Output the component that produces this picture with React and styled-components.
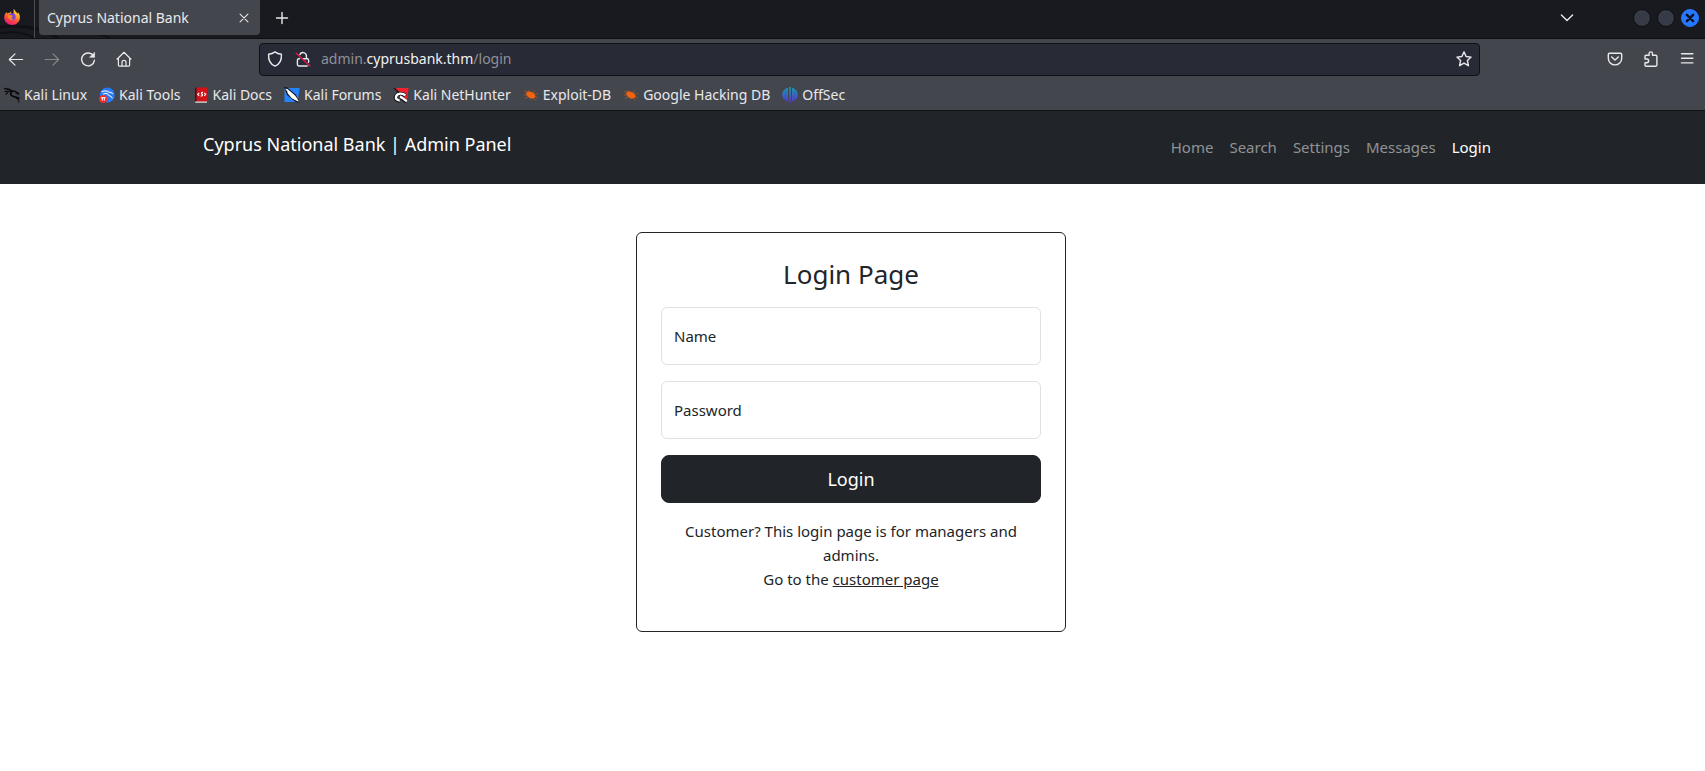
import React from 'react';
import styled, { createGlobalStyle } from 'styled-components';

const GlobalStyle = createGlobalStyle`
  *, *::before, *::after { box-sizing: border-box; }
  body {
    margin: 0;
    background: #fff;
    color: #212529;
    font-family: "Noto Sans", sans-serif;
    font-size: 15px;
    line-height: 24px;
  }
  button, input { font: inherit; }
  svg { display: block; flex: none; }
`;

/* ---------- browser chrome ---------- */

const Chrome = styled.div`
  color: #e9e9ea;
  font-size: 14px;
  line-height: 20px;
`;

const TabStrip = styled.div`
  position: relative;
  display: flex;
  align-items: flex-start;
  height: 39px;
  background: #191a20;
  border-bottom: 1px solid #0f1014;
`;

const StripArt = styled.svg`
  position: absolute;
  left: 0;
  bottom: 0;
`;

const PinnedTab = styled.button`
  position: relative;
  width: 35px;
  height: 38px;
  padding: 0 0 4px 4px;
  border: 0;
  border-right: 1px solid #4b4c52;
  background: none;
`;

const Tab = styled.div`
  position: relative;
  display: flex;
  align-items: center;
  justify-content: space-between;
  width: 221px;
  height: 35px;
  margin-left: 4px;
  padding: 0 8px;
  border-radius: 0 0 4px 4px;
  background: #44464e;
`;

const IconButton = styled.button`
  display: flex;
  align-items: center;
  justify-content: center;
  width: ${(p) => p.$width || 36}px;
  height: ${(p) => p.$height || 32}px;
  padding: 0;
  border: 0;
  background: none;
  color: inherit;
  opacity: ${(p) => (p.disabled ? 0.4 : 1)};
`;

const WindowControls = styled.div`
  display: flex;
  align-items: center;
  gap: 6px;
  height: 35px;
  margin-left: auto;
  padding-right: 6px;
`;

const TabListButton = styled(IconButton)`
  margin-right: 42px;
`;

const WindowButton = styled.button`
  display: flex;
  align-items: center;
  justify-content: center;
  width: 18px;
  height: 18px;
  padding: 0;
  border: 1px solid ${(p) => (p.$close ? '#2777ff' : '#0b0c0f')};
  border-radius: 50%;
  background: ${(p) => (p.$close ? '#2777ff' : '#363b47')};
  color: #0d1322;
`;

const Toolbar = styled.div`
  display: flex;
  align-items: center;
  height: 40px;
  background: #44464e;
`;

const ButtonGroup = styled.div`
  display: flex;

  &:first-child { margin-left: -2px; }
`;

const Spring = styled.div`
  flex: 1 1 0;
  max-width: 117px;
`;

const AddressBar = styled.div`
  display: flex;
  align-items: center;
  flex: 1 1 auto;
  height: 33px;
  padding: 0 7px;
  border: 1px solid #101116;
  border-radius: 4px;
  background: #282a36;
`;

const SiteIcons = styled.div`
  display: flex;
  gap: 12px;
  margin-right: 10px;
`;

const AddressField = styled.div`
  display: grid;
  flex: 1;
  min-width: 0;
`;

const AddressText = styled.label`
  grid-area: 1 / 1;
  align-self: center;
  color: #8f9098;
  white-space: nowrap;

  strong {
    color: #f1f1f2;
    font-weight: 400;
  }
`;

const AddressInput = styled.input`
  grid-area: 1 / 1;
  width: 100%;
  height: 28px;
  padding: 0;
  border: 0;
  outline: 0;
  background: none;
  color: inherit;
`;

const BookmarkBar = styled.nav`
  display: flex;
  align-items: center;
  gap: 12px;
  height: 32px;
  padding: 0 4px;
  border-bottom: 1px solid #0f1113;
  background: #44464e;
`;

const Bookmark = styled.a`
  display: flex;
  align-items: center;
  gap: 4px;
  color: inherit;
  text-decoration: none;
  white-space: nowrap;
`;

/* ---------- page ---------- */

const SiteHeader = styled.header`
  padding: 16px 3px 17px 0;
  background: #212529;
`;

const Container = styled.div`
  display: flex;
  justify-content: space-between;
  align-items: center;
  max-width: 1320px;
  margin: 0 auto;
  padding: 0 12px;
`;

const Brand = styled.a`
  padding-bottom: 6px;
  color: #fff;
  font-size: 18px;
  line-height: 32px;
  text-decoration: none;
`;

const SiteNav = styled.nav`
  display: flex;
`;

const NavLink = styled.a`
  padding: 8px;
  color: ${(p) => (p['aria-current'] ? '#fff' : '#909294')};
  text-decoration: none;
`;

const Main = styled.main`
  padding: 48px 3px 48px 0;
`;

const LoginCard = styled.form`
  max-width: 430px;
  margin: 0 auto;
  padding: 24px 24px 40px;
  border: 1px solid #212529;
  border-radius: 6px;
  text-align: center;
`;

const Title = styled.h1`
  margin: 0 0 16px;
  font-size: 26px;
  font-weight: 400;
  line-height: 34px;
`;

const Field = styled.div`
  display: grid;
  margin-bottom: 16px;
`;

const FieldLabel = styled.label`
  grid-area: 1 / 1;
  place-self: center start;
  padding-left: 13px;
`;

const FieldInput = styled.input`
  grid-area: 1 / 1;
  width: 100%;
  height: 58px;
  padding: 16px 12px;
  border: 1px solid #dee2e6;
  border-radius: 6px;
  background: transparent;
  color: inherit;
`;

const SubmitButton = styled.button`
  width: 100%;
  height: 48px;
  margin-bottom: 16px;
  border: 1px solid #212529;
  border-radius: 8px;
  background: #212529;
  color: #fff;
  font-size: 18px;
`;

const Hint = styled.p`
  margin: 0;

  a { color: inherit; }
`;

/* ---------- icons ---------- */

const Line = ({ children, size = 16, width = 1.2 }) => (
  <svg width={size} height={size} viewBox="0 0 16 16" fill="none" stroke="currentColor"
    strokeWidth={width} strokeLinecap="round" strokeLinejoin="round" aria-hidden="true">
    {children}
  </svg>
);

const BackIcon = () => <Line><path d="M1.3 8.5H14.7M7 2.8L1.3 8.5 7 14.2" /></Line>;
const ForwardIcon = () => <Line><path d="M1.3 8.5H14.7M9 2.8l5.7 5.7L9 14.2" /></Line>;
const ReloadIcon = () => (
  <Line width={1.4}>
    <path d="M13.6 5.2A6.4 6.4 0 1 0 14.4 9.3" />
    <path d="M14.6 1.6v4.7H9.9z" fill="currentColor" strokeWidth="0.6" />
  </Line>
);
const HomeIcon = () => (
  <Line>
    <path d="M1 8.2L8 1.3l7 6.9M2.4 7v7.3c0 .5.3.8.8.8h9.6c.5 0 .8-.3.8-.8V7" />
    <path d="M6 15v-3.6a2 2 0 0 1 4 0V15" />
  </Line>
);
const ShieldIcon = () => (
  <Line width={1.4}><path d="M8 .9C6 2.4 4 3 1.6 3.3c-.4 5.4 1.4 9.8 6.4 11.9 5-2.1 6.8-6.5 6.4-11.9C12 3 10 2.4 8 .9z" /></Line>
);
const InsecureIcon = () => (
  <Line width={1.4}>
    <path d="M4.9 3.600a3.400 3.400 0 0 1 6.500 1v3M7.500 7.800h4.700c.9 0 1.400.5 1.400 1.400v2M12.200 15H3.800c-.9 0-1.400-.5-1.400-1.400V9.200c0-.9.5-1.400 1.400-1.400h.7" />
    <path d="M1.200 2.200l13.500 12.600" stroke="#e2174c" strokeWidth="1.500" />
  </Line>
);
const StarIcon = () => (
  <Line width={1.4}><path d="M8 .9l2.1 4.6 5 .6-3.7 3.4 1 5.2L8 12.1l-4.4 2.6 1-5.2L.9 6.1l5-.6z" /></Line>
);
const PocketIcon = () => (
  <Line width={1.4}>
    <path d="M2.5 2.2h11c.7 0 1.2.5 1.2 1.2v3.8a6.7 6.7 0 0 1-13.4 0V3.4c0-.7.5-1.2 1.2-1.2z" />
    <path d="M4.7 6L8 9l3.300-3" />
  </Line>
);
const PuzzleIcon = () => (
  <Line width={1.4}>
    <path d="M2 8V5.3c0-.7.4-1.1 1.1-1.1h3V2.6a1.7 1.7 0 0 1 3.4 0v1.6h3.3c.7 0 1.1.4 1.1 1.1v8.8c0 .7-.4 1.1-1.1 1.1H3.1c-.7 0-1.1-.4-1.1-1.1v-2.4h1.8a1.85 1.85 0 0 0 0-3.7z" />
  </Line>
);
const MenuIcon = () => <Line width={1.4}><path d="M2.500 2.700h11.400M2.500 7.300h11.400M2.500 11.900h11.400" /></Line>;
const CloseIcon = () => <Line size={14}><path d="M3.5 3.5l9 9m0-9l-9 9" /></Line>;
const PlusIcon = () => <Line width={1.4}><path d="M2.5 8h11M8 2.5v11" /></Line>;
const ChevronIcon = () => <Line width={1.4}><path d="M2.4 5L8 10.5 13.6 5" /></Line>;

const FirefoxIcon = () => (
  <svg width="16" height="16" viewBox="0 0 16 16" aria-hidden="true">
    <defs>
      <linearGradient id="fox" x1="0.8" y1="0" x2="0.3" y2="1">
        <stop offset="0" stopColor="#fff04a" />
        <stop offset="0.35" stopColor="#ffa029" />
        <stop offset="0.65" stopColor="#ff4a3d" />
        <stop offset="1" stopColor="#e8177c" />
      </linearGradient>
    </defs>
    <path fill="url(#fox)" d="M9.7 0c1 .9 1.8 2 2.2 3.1.6.2 1.5 1.1 1.7 1.5.3-.1.5-.8.4-1.3 1.3 1.4 1.9 3.4 1.9 5.1 0 4.2-3.5 7.5-7.8 7.5S.2 12.600 .2 8.400C.2 6 1.400 4.100 2.600 2.900c0 .6.2 1.100.5 1.500C4 3.700 5 3.500 5.800 3.700c.5-.6 1.200-1 1.900-1.100-.6.6-1 1.200-.9 1.800 1 .1 1.700.4 2.400 1C9.900 3.500 9.500 1.400 9.700 0z" />
    <circle cx="8.100" cy="7.800" r="3.500" fill="#7542e5" />
    <path fill="#ff8a1e" d="M3.600 6.200c1.300-.8 2.700-.7 3.900.1.700.5 1.700.3 1.700.8-.2.700-1.700.8-1.800 1.300.1 1 1.200 1.600 2.700 1.100-1 1.700-4.200 1.900-5.600-.2-.6-.9-.9-2-.9-3.100z" />
  </svg>
);

const KaliIcon = () => (
  <svg width="16" height="16" viewBox="0 0 16 16" fill="none" stroke="#0b0b0d"
    strokeLinecap="round" strokeLinejoin="round" aria-hidden="true">
    <path strokeWidth="1.500" d="M.6 1.500c3 .1 5.600.8 7.700 2.600 1.700-.3 3.200.1 4.200 1.200l2 1.200" />
    <path strokeWidth="1.200" d="M.9 4.600c2.500-.8 4.900-.7 6.500.4M3.800 5.400C2.900 6 2.300 6.700 2 7.500" />
    <path strokeWidth="1.900" d="M8.300 4.500C6 5.800 6.200 8.300 8.500 9.100c2.500.7 4.600 1.100 5.600 2.800" />
    <path strokeWidth="1" d="M14.100 11.500c.6 1.300.8 2.500.6 3.600M11.500 9.900l3.900.9M11.500 5.600l2.800 2" />
  </svg>
);
const ToolsIcon = () => (
  <svg width="16" height="16" viewBox="0 0 16 16" aria-hidden="true">
    <circle cx="8.300" cy="8" r="7.500" fill="#2779f5" />
    <path d="M2.500 5c3-1.700 5.500-1.200 7.300.1 2 .2 3.600 1 4.100 2M4 7.200c2-1 4-.8 4.800 0 .5 1.600 3 1.500 4.700 4" stroke="#d9e9ff" strokeWidth="1.100" fill="none" />
    <circle cx="4.200" cy="12" r="4" fill="#ee2c2c" />
    <path d="M1.900 10.700h4.700M3.300 10.700v3M5.300 10.700v3" stroke="#fff" strokeWidth="1" />
  </svg>
);
const DocsIcon = () => (
  <svg width="16" height="16" viewBox="0 0 16 16" aria-hidden="true">
    <path fill="#b9b9bb" d="M2 14h12v2H3a1 1 0 0 1-1-1z" />
    <path fill="#d31217" d="M2 .5h12v13.800H2z" />
    <path fill="#3a1220" d="M2 .5h1.500v13.800H2z" />
    <path d="M6.200 5.800L4.700 7.300l1.500 1.500M11.300 5.800l1.500 1.500-1.500 1.500M10 5.400c-2.300 0-1.600 1.500-.9 1.900.9.500.4 2-1.500 1.700" stroke="#fff" strokeWidth="1.100" fill="none" />
  </svg>
);
const ForumsIcon = () => (
  <svg width="16" height="16" viewBox="0 0 16 16" aria-hidden="true">
    <path fill="#2584fb" d="M.5 1h15.200l-2.200 14H.5z" />
    <path fill="#15171d" d="M0 0l3 .2 9 7.500 3.500 8-4-.6L3 8z" />
    <path fill="#fff" d="M1 1.700l2.400.2 2.700 2.300 4.700 4 2.200 3 1.800 3.600-3.300-1.600-3.700-1.900-4-4.900-.7-2.400z" />
  </svg>
);
const NetHunterIcon = () => (
  <svg width="16" height="16" viewBox="0 0 16 16" aria-hidden="true">
    <path fill="#f5222d" d="M2 1h13.500L14.300 12 9 14z" />
    <path fill="none" stroke="#17171b" strokeWidth="4" d="M12.300 9C10 5.500 3.500 6 2.700 10c-.3 2 1.300 3.800 4 3.800M7 10.500c2 .1 3.500 2 7 4" />
    <path fill="none" stroke="#fff" strokeWidth="2.400" d="M12.400 8.500C10 5.800 4 5.800 3 9.700c-.5 2.200 1.600 3.800 3.700 3.500M7 9.700c2 .1 3.500 2.800 7 4.400" />
    <path stroke="#17171b" strokeWidth="1.600" d="M1 1l5 4.500" />
  </svg>
);
const BugIcon = () => (
  <svg width="16" height="16" viewBox="0 0 16 16" aria-hidden="true">
    <ellipse cx="7.800" cy="8" rx="5" ry="3.100" transform="rotate(28 7.800 8)" fill="#f2630f" />
    <path fill="none" stroke="#e8600f" strokeOpacity="0.700" strokeWidth="0.700" d="M4 5L1.400 4.200M3.500 7.500L1 8.300M5 10.200l-3.200 1.300M8 11.500l-1.300 1.500M11.500 12l1.300 1.500M12.500 9.500l2.500 1.700M11.800 7l3.300-.3M10 5.500l2.200-1.600M6.500 5L5 3.200" />
  </svg>
);
const OffSecIcon = () => (
  <svg width="16" height="16" viewBox="0 0 16 16" aria-hidden="true">
    <defs>
      <linearGradient id="offsec" x1="0" y1="0" x2="0" y2="1">
        <stop offset="0" stopColor="#12a4b5" />
        <stop offset="1" stopColor="#5b2fd6" />
      </linearGradient>
    </defs>
    <path fill="url(#offsec)" d="M7.200 0v16h1.600V0zM5.900.8v13.400C2 13.500.3 10.800.3 7.700.3 4.400 2.500 1.600 5.900.8zM10.100.8c3.400.8 5.600 3.600 5.600 6.900 0 3.100-1.700 5.800-5.600 6.500z" />
    <path stroke="#393c4d" strokeOpacity="0.500" strokeWidth="0.500" d="M3.300 2v11.500M12.700 2v11.500" />
  </svg>
);

const bookmarks = [
  ['Kali Linux', KaliIcon],
  ['Kali Tools', ToolsIcon],
  ['Kali Docs', DocsIcon],
  ['Kali Forums', ForumsIcon],
  ['Kali NetHunter', NetHunterIcon],
  ['Exploit-DB', BugIcon],
  ['Google Hacking DB', BugIcon],
  ['OffSec', OffSecIcon],
];

const links = ['Home', 'Search', 'Settings', 'Messages', 'Login'];

function BrowserChrome() {
  return (
    <Chrome>
      <TabStrip>
        <StripArt width="120" height="14" viewBox="0 0 120 14" fill="none" stroke="#101116" aria-hidden="true">
          <path d="M0 3c26-3 44 2 58 11" strokeWidth="3" />
          <path d="M0 9c14-2 26 0 34 5M78 9c14-1 24 1 32 5" strokeWidth="2" />
        </StripArt>
        <PinnedTab aria-label="Firefox View"><FirefoxIcon /></PinnedTab>
        <Tab>
          <span>Cyprus National Bank</span>
          <IconButton $width={16} $height={24} aria-label="Close tab"><CloseIcon /></IconButton>
        </Tab>
        <IconButton $width={44} $height={35} aria-label="New tab"><PlusIcon /></IconButton>
        <WindowControls>
          <TabListButton aria-label="List all tabs"><ChevronIcon /></TabListButton>
          <WindowButton aria-label="Minimize" />
          <WindowButton aria-label="Maximize" />
          <WindowButton $close aria-label="Close window">
            <Line size={10} width={4}><path d="M3 3l10 10m0-10L3 13" /></Line>
          </WindowButton>
        </WindowControls>
      </TabStrip>
      <Toolbar>
        <ButtonGroup>
          <IconButton aria-label="Back"><BackIcon /></IconButton>
          <IconButton aria-label="Forward" disabled><ForwardIcon /></IconButton>
          <IconButton aria-label="Reload"><ReloadIcon /></IconButton>
          <IconButton aria-label="Home"><HomeIcon /></IconButton>
        </ButtonGroup>
        <Spring />
        <AddressBar>
          <SiteIcons><ShieldIcon /><InsecureIcon /></SiteIcons>
          <AddressField>
            <AddressText htmlFor="address">admin.<strong>cyprusbank.thm</strong>/login</AddressText>
            <AddressInput id="address" type="text" />
          </AddressField>
          <IconButton $width={16} aria-label="Bookmark this page"><StarIcon /></IconButton>
        </AddressBar>
        <Spring />
        <ButtonGroup>
          <IconButton aria-label="Save to Pocket"><PocketIcon /></IconButton>
          <IconButton aria-label="Extensions"><PuzzleIcon /></IconButton>
          <IconButton aria-label="Menu"><MenuIcon /></IconButton>
        </ButtonGroup>
      </Toolbar>
      <BookmarkBar aria-label="Bookmarks">
        {bookmarks.map(([name, Icon]) => (
          <Bookmark key={name} href="#"><Icon />{name}</Bookmark>
        ))}
      </BookmarkBar>
    </Chrome>
  );
}

export default function App() {
  return (
    <>
      <GlobalStyle />
      <BrowserChrome />
      <SiteHeader>
        <Container>
          <Brand href="#">Cyprus National Bank | Admin Panel</Brand>
          <SiteNav aria-label="Main">
            {links.map((name) => (
              <NavLink key={name} href="#" aria-current={name === 'Login' ? 'page' : undefined}>{name}</NavLink>
            ))}
          </SiteNav>
        </Container>
      </SiteHeader>
      <Main>
        <LoginCard>
          <Title>Login Page</Title>
          <Field>
            <FieldLabel htmlFor="name">Name</FieldLabel>
            <FieldInput id="name" type="text" />
          </Field>
          <Field>
            <FieldLabel htmlFor="password">Password</FieldLabel>
            <FieldInput id="password" type="password" />
          </Field>
          <SubmitButton type="submit">Login</SubmitButton>
          <Hint>
            Customer? This login page is for managers and admins.
            <br />
            Go to the <a href="#">customer page</a>
          </Hint>
        </LoginCard>
      </Main>
    </>
  );
}
